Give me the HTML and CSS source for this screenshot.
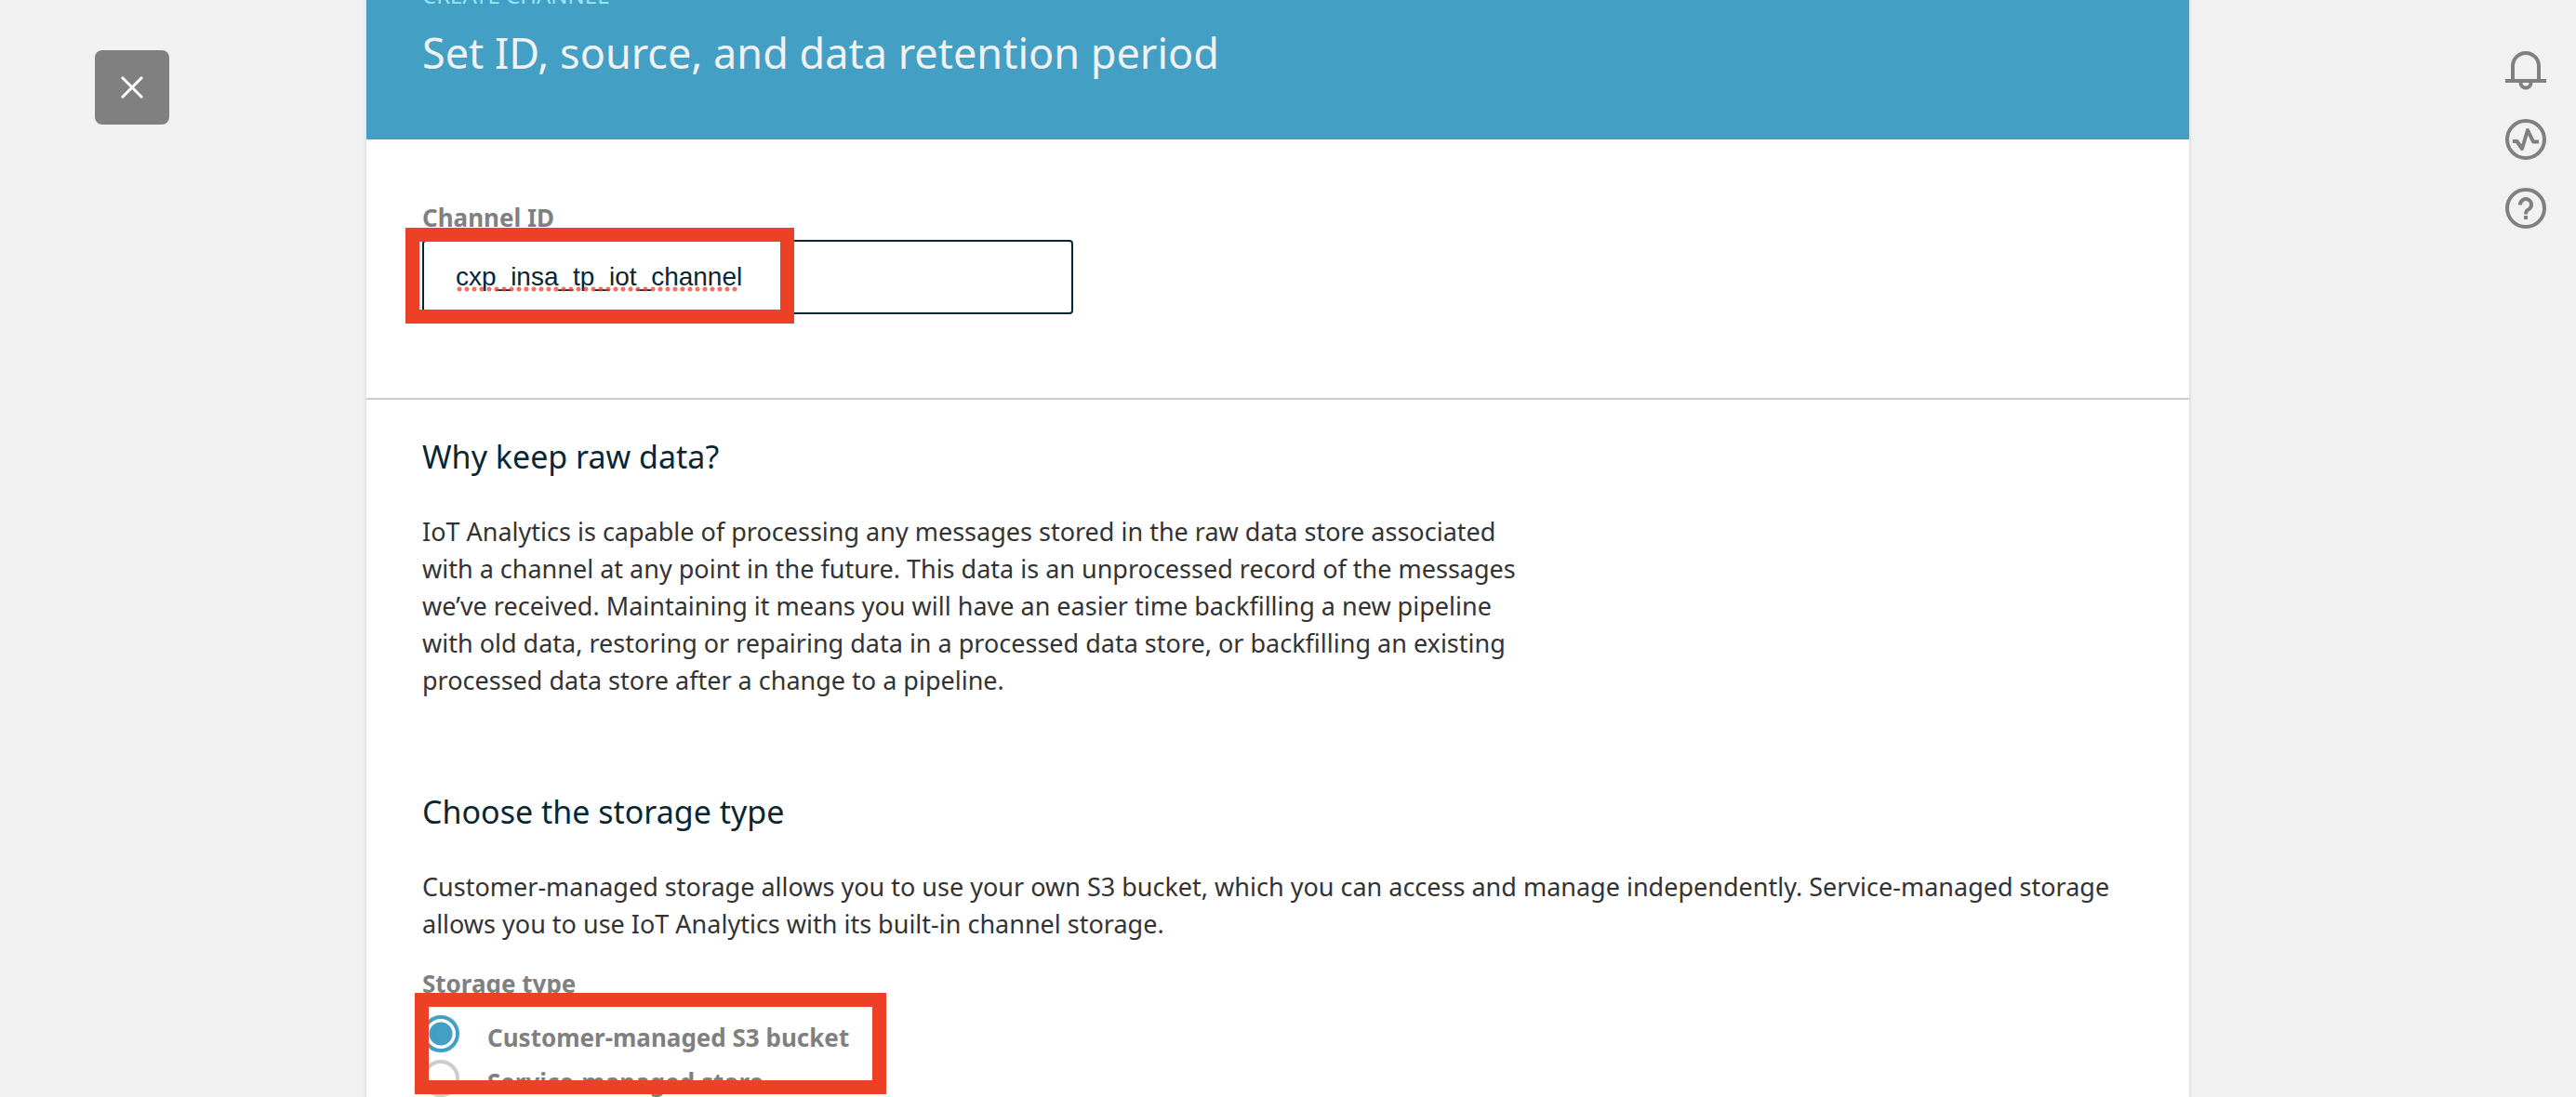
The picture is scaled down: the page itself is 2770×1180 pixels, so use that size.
FILE: index.html
```html
<!DOCTYPE html>
<html lang="en">
<head>
  <meta charset="utf-8">
  <meta name="viewport" content="width=device-width, initial-scale=1">
  <title>Create channel</title>
  <link rel="stylesheet" href="styles.css">
</head>
<body>
  <div class="page">
    <div class="side side-left">
      <button class="close" type="button" aria-label="Close">
        <svg viewBox="0 0 24 24" width="24" height="24"><path d="M1 1 23 23M23 1 1 23"/></svg>
      </button>
    </div>

    <main class="card">
      <header class="banner">
        <p class="eyebrow">CREATE CHANNEL</p>
        <h1 class="title">Set ID, source, and data retention period</h1>
      </header>

      <form>
        <section class="section section-id">
          <label class="label" for="channel-id">Channel ID</label>
          <div class="field">
            <input class="input" id="channel-id" type="text" value="cxp_insa_tp_iot_channel" spellcheck="false">
            <span class="spelling"></span>
            <span class="highlight highlight-id"></span>
          </div>
        </section>

        <section class="section section-data">
          <h2 class="heading">Why keep raw data?</h2>
          <p class="text text-narrow">IoT Analytics is capable of processing any messages stored in the raw data store associated with a channel at any point in the future. This data is an unprocessed record of the messages we’ve received. Maintaining it means you will have an easier time backfilling a new pipeline with old data, restoring or repairing data in a processed data store, or backfilling an existing processed data store after a change to a pipeline.</p>

          <h2 class="heading heading-next">Choose the storage type</h2>
          <p class="text">Customer-managed storage allows you to use your own S3 bucket, which you can access and manage independently. Service-managed storage allows you to use IoT Analytics with its built-in channel storage.</p>

          <fieldset class="choices">
            <legend class="label">Storage type</legend>
            <div class="options">
              <div class="option">
                <input class="radio" type="radio" name="storage" id="customer" checked>
                <label class="option-label" for="customer">Customer-managed S3 bucket</label>
              </div>
              <div class="option">
                <input class="radio" type="radio" name="storage" id="service">
                <label class="option-label" for="service">Service-managed store</label>
              </div>
              <span class="highlight highlight-storage"></span>
            </div>
          </fieldset>
        </section>
      </form>
    </main>

    <nav class="side side-right" aria-label="Tools">
      <button class="tool" type="button" aria-label="Notifications">
        <svg viewBox="0 0 44 44" width="44" height="44"><path d="M8 33V17a14 14 0 0 1 28 0v16M0 33h44M16.5 35a5.5 5.5 0 0 0 11 0"/></svg>
      </button>
      <button class="tool" type="button" aria-label="Activity">
        <svg viewBox="0 0 44 44" width="44" height="44"><circle cx="22" cy="22" r="20"/><path d="M8 24h4.500l5.500 8 6-20 6 12.500h6" stroke-linejoin="round"/></svg>
      </button>
      <button class="tool" type="button" aria-label="Help">
        <svg viewBox="0 0 44 44" width="44" height="44"><circle cx="22" cy="22" r="20"/><path d="M16 18.500v-.500a6 6 0 1 1 9.500 5C23 24.500 22 25 22 28.500M22 30v4"/></svg>
      </button>
    </nav>
  </div>
</body>
</html>
```
FILE: styles.css
```css
:root {
  --blue: #449fc5;
  --ink: #0a2633;
  --gray: #808080;
  --red: #ec4027;
}

* {
  box-sizing: border-box;
}

body {
  margin: 0;
  background: #f1f1f1;
  color: #333;
  font-family: "Noto Sans", "Open Sans", sans-serif;
}

h1, h2, p {
  margin: 0;
}

button {
  padding: 0;
  border: 0;
  background: none;
  cursor: pointer;
}

svg {
  display: block;
  fill: none;
  stroke: var(--gray);
  stroke-width: 4;
}

.page {
  display: grid;
  grid-template-columns: 1fr minmax(0, 1960px) 1fr;
  height: 100vh;
  padding-right: 22px;
  overflow: hidden;
}

.side {
  display: flex;
  flex-direction: column;
  gap: 30px;
  padding-top: 54px;
}

.side-left {
  align-items: center;
  padding-right: 110px;
}

.side-right {
  align-items: flex-end;
  padding-right: 10px;
}

.close {
  display: grid;
  place-items: center;
  width: 80px;
  height: 80px;
  border-radius: 8px;
  background: var(--gray);
}

.close svg {
  stroke: #fff;
  stroke-width: 3;
}

/* The card is scrolled so that the top of its banner is out of view. */
.card {
  margin-top: -61px;
  background: #fff;
  box-shadow: 0 0 4px rgba(0, 0, 0, .15);
}

.banner {
  display: flex;
  flex-direction: column;
  gap: 16px;
  padding: 40px 60px 63px;
  background: var(--blue);
}

.eyebrow {
  color: #9be5fb;
  font-size: 24px;
  line-height: 32px;
}

.title {
  color: #f1f1f1;
  font-size: 45px;
  font-weight: 400;
  line-height: 60px;
}

.section {
  padding: 36px 60px;
}

.section-id {
  padding-top: 64px;
  padding-bottom: 90px;
  border-bottom: 2px solid #ccc;
}

.label {
  display: block;
  padding: 0;
  color: var(--gray);
  font-size: 26px;
  font-weight: 700;
  line-height: 40px;
}

.field {
  position: relative;
  max-width: 700px;
  margin-top: 4px;
}

.input {
  display: block;
  width: 100%;
  height: 80px;
  padding: 0 34px;
  border: 2px solid var(--ink);
  border-radius: 4px;
  background: #fff;
  color: var(--ink);
  font: 28px "Liberation Sans", Arial, sans-serif;
  outline: 0;
}

.spelling {
  position: absolute;
  left: 36px;
  top: 50px;
  width: 304px;
  height: 6px;
  background: radial-gradient(circle, rgba(236, 64, 39, .75) 2px, transparent 3px) 0 0 / 8px 6px;
}

.highlight {
  position: absolute;
  border: 15px solid var(--red);
  pointer-events: none;
}

.highlight-id {
  left: -18px;
  top: -13px;
  width: 418px;
  height: 103px;
}

.highlight-storage {
  left: -8px;
  top: -20px;
  width: 507px;
  height: 109px;
}

.heading {
  margin-bottom: 36px;
  color: var(--ink);
  font-size: 34px;
  font-weight: 400;
  line-height: 50px;
}

.heading-next {
  margin-top: 96px;
}

.text {
  font-size: 27px;
  line-height: 40px;
}

.text-narrow {
  max-width: 1190px;
}

.choices {
  margin: 24px 0 0;
  padding: 0;
  border: 0;
}

.options {
  position: relative;
  margin-top: 10px;
}

.option {
  display: flex;
  gap: 30px;
  height: 48px;
}

.radio {
  appearance: none;
  flex: none;
  width: 40px;
  height: 40px;
  margin: 4px 0 0;
  border: 4px solid #ccc;
  border-radius: 50%;
}

.radio:checked {
  border-color: var(--blue);
  background: radial-gradient(circle, var(--blue) 12px, transparent 13px);
}

.option-label {
  padding-top: 8px;
  color: var(--gray);
  font-size: 26px;
  font-weight: 700;
  line-height: 40px;
}
```
